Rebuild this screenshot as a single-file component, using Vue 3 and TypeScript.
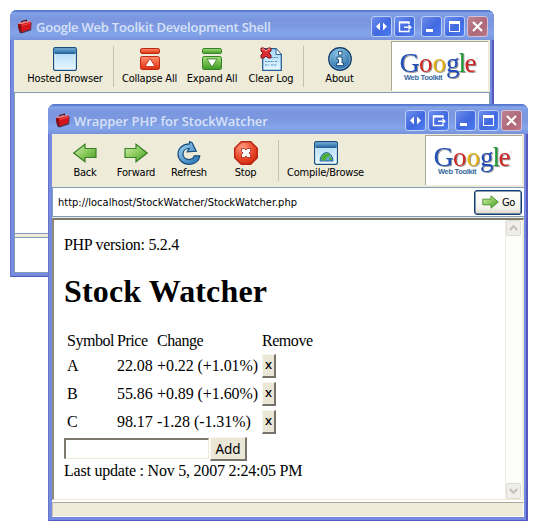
<script setup lang="ts">
interface Tool { icon: string; label: string; width: number; sep?: boolean }
interface Shell { id: string; title: string; tools: Tool[] }

const shells: Shell[] = [
  {
    id: 'dev',
    title: 'Google Web Toolkit Development Shell',
    tools: [
      { icon: 'hosted', label: 'Hosted Browser', width: 97, sep: true },
      { icon: 'collapse', label: 'Collapse All', width: 71 },
      { icon: 'expand', label: 'Expand All', width: 54 },
      { icon: 'clear', label: 'Clear Log', width: 65, sep: true },
      { icon: 'about', label: 'About', width: 71 },
    ],
  },
  {
    id: 'php',
    title: 'Wrapper PHP for StockWatcher',
    tools: [
      { icon: 'back', label: 'Back', width: 52 },
      { icon: 'forward', label: 'Forward', width: 50 },
      { icon: 'refresh', label: 'Refresh', width: 56 },
      { icon: 'stop', label: 'Stop', width: 62, sep: true },
      { icon: 'browse', label: 'Compile/Browse', width: 93 },
    ],
  },
]
const controls = ['arrows', 'export', 'min', 'max', 'close']
const stocks = [
  { symbol: 'A', price: '22.08', change: '+0.22 (+1.01%)' },
  { symbol: 'B', price: '55.86', change: '+0.89 (+1.60%)' },
  { symbol: 'C', price: '98.17', change: '-1.28 (-1.31%)' },
]
</script>

<template>
  <main class="desktop">
    <svg class="defs" width="0" height="0">
      <defs>
        <linearGradient id="gGreen" x1="0" y1="0" x2="1" y2="1"><stop offset="0" stop-color="#d3f0b4" /><stop offset=".5" stop-color="#8ccb5e" /><stop offset="1" stop-color="#3f9a22" /></linearGradient>
        <linearGradient id="gGreenBtn" x1="0" y1="0" x2="0" y2="1"><stop offset="0" stop-color="#a5dc80" /><stop offset="1" stop-color="#3c9a20" /></linearGradient>
        <linearGradient id="gRed" x1="0" y1="0" x2="0" y2="1"><stop offset="0" stop-color="#ff8f6e" /><stop offset="1" stop-color="#e02d0c" /></linearGradient>
        <linearGradient id="gSky" x1="0" y1="0" x2="0" y2="1"><stop offset="0" stop-color="#a4d6f8" /><stop offset="1" stop-color="#e8f7ff" /></linearGradient>
        <linearGradient id="gBar" x1="0" y1="0" x2="0" y2="1"><stop offset="0" stop-color="#73acd6" /><stop offset="1" stop-color="#2a6aa5" /></linearGradient>
        <linearGradient id="gBlue" x1="0" y1="0" x2="1" y2="1"><stop offset="0" stop-color="#a9d8f5" /><stop offset="1" stop-color="#1c6dab" /></linearGradient>
        <radialGradient id="gStop" cx=".35" cy=".25" r=".8"><stop offset="0" stop-color="#ff9b7c" /><stop offset=".6" stop-color="#ea4a2c" /><stop offset="1" stop-color="#d12a10" /></radialGradient>
        <radialGradient id="gInfo" cx=".4" cy=".25" r=".8"><stop offset="0" stop-color="#8cc4e8" /><stop offset="1" stop-color="#1f639e" /></radialGradient>
      </defs>
    </svg>

    <section v-for="s in shells" :key="s.id" class="window" :class="s.id">
      <header class="titlebar">
        <svg class="case" width="16" height="16" viewBox="0 0 17 17">
          <path d="M1 5.5 2.5 14.5 5 15.5 15 12 15.5 4z" fill="#3a1020" opacity=".75" />
          <path d="M5 4.5V2.6L10 1.3V3.5" fill="none" stroke="#601018" stroke-width="1.3" />
          <path d="M.8 5 3 4 13.5 2 15 3 4.2 5.8z" fill="#f58078" />
          <path d="M4.2 5.7 15 2.9 14.2 10.7 4.8 14z" fill="#d4141a" />
          <path d="M.8 5 4.2 5.8 4.8 14 1.9 12z" fill="#8c0a10" />
          <path d="M5 7 14 4.5" stroke="#f4514a" />
        </svg>
        <h2 class="title">{{ s.title }}</h2>
        <div class="controls">
          <button v-for="c in controls" :key="c" class="control" :class="c">
            <svg width="19" height="19" viewBox="0 0 19 19">
              <path v-if="c === 'arrows'" d="M8 5.5v8L4 9.5zM11 5.5v8l4-4z" fill="#fff" />
              <g v-else-if="c === 'export'" fill="none" stroke="#fff" stroke-width="1.4"><path d="M14 7V5H4.5v9.5H14V13M4.5 5.7H14M9 10.2h7M13.5 8l2.3 2.2-2.3 2.2" /></g>
              <path v-else-if="c === 'min'" d="M4 12h7v3H4z" fill="#fff" />
              <path v-else-if="c === 'max'" d="M4 4h11v11H4zM5 7v7h9V7z" fill="#fff" fill-rule="evenodd" />
              <path v-else d="m5 5 9 9M14 5l-9 9" stroke="#fff" stroke-width="2.2" />
            </svg>
          </button>
        </div>
      </header>

      <nav class="toolbar">
        <div class="tools">
          <button v-for="t in s.tools" :key="t.label" class="tool" :class="[t.icon, { sep: t.sep }]" :style="{ width: t.width + 'px' }">
            <svg width="24" height="24" viewBox="0 0 24 24">
              <g v-if="t.icon === 'hosted' || t.icon === 'browse'">
                <rect x=".7" y=".7" width="22.6" height="22.6" rx="1.5" fill="url(#gSky)" stroke="#17507f" stroke-width="1.4" />
                <path d="M1.4 1.4h21.2v4.8H1.4z" fill="url(#gBar)" />
                <path d="M2 6.4h20" stroke="#17507f" stroke-width=".9" />
                <path d="M1.9 7v15.1h20.2V7" fill="none" stroke="#f2fbff" stroke-width=".9" />
                <g v-if="t.icon === 'browse'">
                  <path d="M6 20a6.5 8.4 0 0 1 13 0z" fill="#66a7dc" stroke="#26639b" />
                  <path d="m7 17 3-4 4-1 2.5 2-2 2-2 .5-1 3H8zM15 17l3-1v3h-3z" fill="#4faf32" />
                </g>
              </g>
              <g v-else-if="t.icon === 'collapse'">
                <rect x="2.5" y="1.5" width="19" height="5" rx="1.6" fill="url(#gRed)" stroke="#bd2813" />
                <rect x="2.5" y="9.5" width="19" height="13" rx="1.8" fill="url(#gRed)" stroke="#bd2813" />
                <path d="m12 11.5-5 8h10z" fill="#fff" stroke="#bd2813" stroke-width=".8" />
              </g>
              <g v-else-if="t.icon === 'expand'">
                <rect x="2.5" y="1.5" width="19" height="5" rx="1.6" fill="url(#gGreenBtn)" stroke="#338422" />
                <rect x="2.5" y="9.5" width="19" height="13" rx="1.8" fill="url(#gGreenBtn)" stroke="#338422" />
                <path d="m12 20-5-8h10z" fill="#fff" stroke="#338422" stroke-width=".8" />
              </g>
              <g v-else-if="t.icon === 'clear'">
                <path d="M3.7 1.7H17l5.3 5.8v15.8H3.7z" fill="url(#gSky)" stroke="#286193" stroke-width="1.3" />
                <path d="M17 2v5.5h5" fill="#fff" stroke="#286193" />
                <path d="M12 10.5h7M6 14.5h9M16 14.5h3M6 18h4M12 18h6" stroke="#4f8cb9" stroke-dasharray="2 .8" />
                <path d="M2 1h3l2 2 2-2h3v3L9.8 6l2.2 2v3H9L7 9l-2 2H2V8l2-2-2-2z" fill="#d92d30" stroke="#7d1620" />
                <path d="M3 2.2h2l2 2 2-2h2" stroke="#ffb0ac" fill="none" />
              </g>
              <g v-else-if="t.icon === 'about'">
                <circle cx="12" cy="12" r="11.2" fill="url(#gInfo)" stroke="#143f68" stroke-width="1.4" />
                <circle cx="12" cy="12" r="10.1" fill="none" stroke="#8fc3e5" stroke-width=".7" />
                <path d="M10.5 4.5h3.5V8h-3.5zM9 10h5v6h1.5v2.5H8.5V16h2v-3.5H9z" fill="#fff" stroke="#154a77" stroke-width=".9" />
              </g>
              <path v-else-if="t.icon === 'back'" d="M.8 12 12 3.2v4.3h11v9H12v4.3z" fill="url(#gGreen)" stroke="#398226" stroke-width="1.2" />
              <path v-else-if="t.icon === 'forward'" d="M23.2 12 12 3.2v4.3H1v9h11v4.3z" fill="url(#gGreen)" stroke="#398226" stroke-width="1.2" />
              <path v-else-if="t.icon === 'refresh'" d="M12.5 2.8V.7l2.4.8 4.4 8.8-9.1.6 2-3.4c-8.4.2-8.2 11 .2 11 3 0 4-1.2 4.9-3.7h5.5c-.6 5.5-5 8.5-10.4 8.5C5.6 23.3 1 18.5 1 13.1 1 7.1 6 2.8 12.500 2.800z" fill="url(#gBlue)" stroke="#164c7d" stroke-width="1.2" />
              <g v-else>
                <path d="M7.3.7h9.4l6.6 6.6v9.4l-6.6 6.6H7.3L.7 16.7V7.3z" fill="url(#gStop)" stroke="#ba2410" stroke-width="1.4" />
                <path d="M7.5 7.5h3L12 9l1.5-1.500h3v3L15 12l1.500 1.500v3h-3L12 15l-1.500 1.500h-3v-3L9 12l-1.500-1.500z" fill="#fff" stroke="#a32112" stroke-width=".8" />
              </g>
            </svg>
            <span class="label">{{ t.label }}</span>
          </button>
        </div>
        <div class="brand">
          <svg width="96" height="48" viewBox="0 0 96 48">
            <text class="google" y="29.5"><tspan x="7.5" fill="#2350b8" font-size="28">G</tspan><tspan x="27" fill="#cf2626">o</tspan><tspan x="40.500" fill="#e3b010">o</tspan><tspan x="54" fill="#2350b8">g</tspan><tspan x="66.500" fill="#1f9a36">l</tspan><tspan x="72.500" fill="#cf2626">e</tspan></text>
            <text class="kit" x="12" y="37.5" textLength="38.5">Web Toolkit</text>
            <text x="84" y="18" font-size="3" fill="#777">™</text>
          </svg>
        </div>
      </nav>

      <div v-if="s.id === 'dev'" class="log"><div class="tree"></div><div class="splitter"></div><div class="detail"></div></div>
      <template v-else>
        <form class="address" @submit.prevent>
          <span class="url">http://localhost/StockWatcher/StockWatcher.php</span>
          <button class="go">
            <svg width="17" height="14" viewBox="0 0 17 14"><path d="M16.3 7 9 .8v3.4H.8v5.6H9v3.4z" fill="url(#gGreen)" stroke="#4f973a" /></svg>
            <span>Go</span>
          </button>
        </form>
        <div class="viewport">
          <article class="page">
            <p class="version">PHP version: 5.2.4</p>
            <h1>Stock Watcher</h1>
            <div class="table">
              <div class="row head"><span>Symbol</span><span>Price</span><span>Change</span><span>Remove</span></div>
              <div v-for="q in stocks" :key="q.symbol" class="row">
                <span>{{ q.symbol }}</span><span>{{ q.price }}</span><span>{{ q.change }}</span><button class="raised remove">x</button>
              </div>
            </div>
            <div class="add"><input class="symbol" type="text" /><button class="raised plus">Add</button></div>
            <p>Last update : Nov 5, 2007 2:24:05 PM</p>
          </article>
          <div class="scroll">
            <span class="knob"><svg width="9" height="6" viewBox="0 0 9 6"><path d="M.8 5 4.5 1.3 8.2 5" /></svg></span>
            <span class="knob"><svg width="9" height="6" viewBox="0 0 9 6"><path d="M.8 1 4.5 4.7 8.2 1" /></svg></span>
          </div>
        </div>
        <footer class="status"></footer>
      </template>
    </section>
  </main>
</template>

<style>
body { margin: 0; background: #fff; overflow: hidden; }
</style>

<style scoped>
* { box-sizing: border-box; }
.desktop { position: relative; width: 541px; height: 530px; background: #fff; overflow: hidden; font-family: "DejaVu Sans Condensed", "DejaVu Sans", "Noto Sans", sans-serif; color: #000; }
.defs { position: absolute; }
button { border: 0; padding: 0; margin: 0; background: none; font: inherit; color: inherit; }
svg { display: block; flex: none; }
.window { position: absolute; display: flex; flex-direction: column; padding: 0 4px 4px; border-radius: 7px 7px 0 0; background: #748be0; box-shadow: inset 1px 0 #6874cc, inset -2px -1px #5558bd; overflow: hidden; }
.dev { left: 10px; top: 10px; width: 484px; height: 267px; }
.php { left: 48px; top: 104px; width: 480px; height: 417px; }
.titlebar { flex: none; display: flex; align-items: center; height: 30px; margin: 0 -4px; padding: 3px 6px 0 7px; background: linear-gradient(#5477d0 0 1px, #87a6e9 3px, #7f9de4 5px, #7a96df 9px, #7d99e1 17px, #84a5e9 23px, #7f9fe6 26px, #7891dc 30px); }
.title { flex: 1; margin: 0 0 0 3px; font: 600 13px/18px "Open Sans", "Noto Sans", sans-serif; color: #d7e2f8; white-space: nowrap; letter-spacing: -.22px; }
.php .title { letter-spacing: -.07px; }
.controls { display: flex; gap: 2px; }
.control { width: 21px; height: 21px; border: 1px solid #bdcef5; border-radius: 3px; background: linear-gradient(135deg, #6d8eed, #4169df 55%, #4d7df1); }
.control.min { margin-left: 4px; }
.control.close { background: linear-gradient(135deg, #bd8190, #ae6878 60%, #bb7888); border-color: #d6bfd6; }
.toolbar { flex: none; display: flex; justify-content: space-between; height: 53px; background: #eeebd9; border-bottom: 1px solid #7f9db9; }
.php .toolbar { height: 54px; }
.tools { display: flex; padding-left: 3px; }
.php .tools { padding-left: 7px; }
.tool { position: relative; display: flex; flex-direction: column; align-items: center; padding-top: 7px; height: 52px; }
.dev .sep { padding-right: 1px; }
.stop { padding-right: 5px; }
.sep::after { content: ""; position: absolute; right: 0; top: 6px; width: 1px; height: 41px; background: #c5c2b3; }
.label { font-size: 11px; line-height: 14px; margin-top: 1px; white-space: nowrap; letter-spacing: -.2px; }
.brand { width: 97px; height: 50px; margin: 1px 2px 0 0; border-top: 1px solid #aaa79b; border-left: 1px solid #aaa79b; background: #fff; }
.google { font: 27px "Liberation Serif", serif; filter: drop-shadow(1px 1px .6px rgba(0, 0, 0, .4)); }
.kit { font: bold 7.5px "Liberation Sans", sans-serif; fill: #35689c; }
.log { flex: 1; display: flex; flex-direction: column; background: #fff; border: 1px solid #7f9db9; border-top: 0; }
.tree { height: 140px; }
.splitter { height: 5px; background: #eeebd9; border: solid #7f9db9; border-width: 1px 0; }
.address { flex: none; display: flex; justify-content: space-between; align-items: center; height: 29px; padding: 0 2px 0 5px; background: #fff; border: solid #7f9db9; border-width: 0 0 1px 1px; }
.url { font-size: 11px; }
.go { display: flex; align-items: center; gap: 3px; width: 48px; height: 25px; padding-left: 7px; border: 1px solid #123f70; border-radius: 3px; background: linear-gradient(#fff, #f3f3ec 75%, #d9d5c8); box-shadow: inset 0 0 0 .5px #123f70; font-size: 11px; letter-spacing: -.3px; }
.viewport { flex: 1; display: flex; justify-content: space-between; margin-top: 1px; border: solid; border-width: 2px 1px 1px 2px; border-color: #7d796c #eeebd9 #eeebd9 #8d897d; box-shadow: 0 -1px #eeebd9, 0 2px #fff; background: #fff; }
.page { padding: 16px 0 0 10px; font: 16px/18px "Liberation Serif", serif; }
.page p { margin: 0; white-space: nowrap; letter-spacing: -.22px; }
.page .version { letter-spacing: -.3px; }
.page h1 { margin: 19px 0 21px; font-size: 32px; line-height: 36px; letter-spacing: .15px; }
.table { padding-left: 3px; }
.row { display: grid; grid-template-columns: 50px 40px 105px 60px; height: 28px; line-height: 28px; white-space: nowrap; letter-spacing: -.07px; }
.row.head { height: 22px; line-height: 22px; letter-spacing: -.45px; }
.raised { font-family: "Noto Sans", sans-serif; background: #ebe7d7; border: solid; border-width: 1px 2px 2px 1px; border-color: #f7f5ec #77736a #77736a #f7f5ec; }
.remove { width: 14px; height: 24px; margin-top: 2px; padding-bottom: 2px; font-size: 13px; font-weight: 500; line-height: 19px; }
.add { display: flex; gap: 1px; height: 26px; padding-top: 1px; }
.symbol { width: 145px; height: 21px; margin-top: 1px; border: solid; border-width: 2px 1px 1px 2px; border-color: #7d796c #eeebd9 #eeebd9 #7d796c; }
.plus { width: 37px; height: 24px; font-size: 13.5px; line-height: 20px; }
.scroll { display: flex; flex-direction: column; justify-content: space-between; align-items: center; width: 18px; padding-right: 1px; border-left: 1px solid #eeede5; border-right: 1px solid #eeede5; background: #fdfdfa; }
.knob { display: flex; align-items: center; justify-content: center; width: 15px; height: 16px; border: 1px solid #dedbd0; border-radius: 2px; background: #efeee8; }
.knob path { fill: none; stroke: #c4c1b8; stroke-width: 2.2; }
.status { flex: none; height: 15px; margin-top: 2px; background: #eeebd9; border: 1px solid #fff; border-top-color: #aaa79b; border-left-color: #c5c2b3; position: relative; }
</style>
